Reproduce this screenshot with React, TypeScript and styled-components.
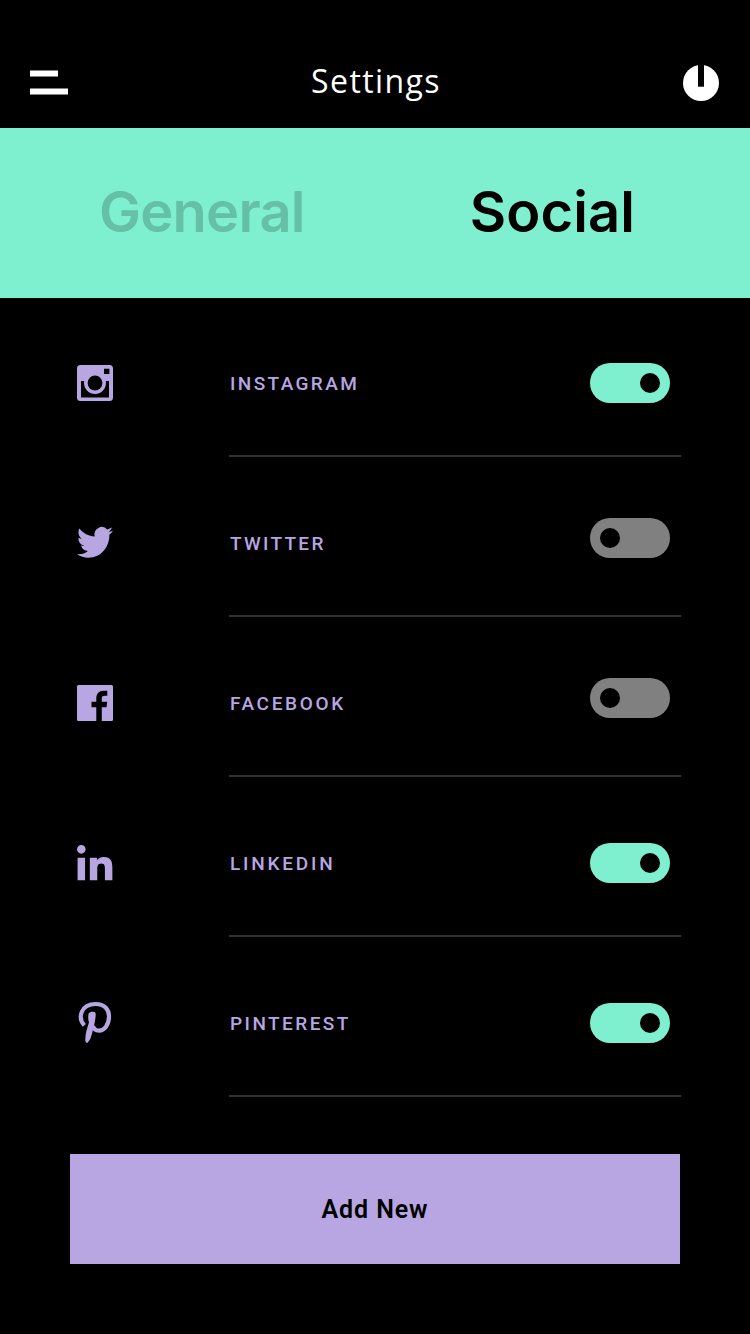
import React, { useState } from "react";
import styled, { createGlobalStyle } from "styled-components";

const mint = "#7ff0cf";
const lilac = "#b8a6e3";

const GlobalStyle = createGlobalStyle`
  * { box-sizing: border-box; }
  body { margin: 0; background: #000; }
  button { border: 0; padding: 0; background: none; cursor: pointer; }
`;

const Screen = styled.main`
  width: 750px;
  height: 1334px;
  display: flex;
  flex-direction: column;
  background: #000;
  font-family: Roboto, "Liberation Sans", sans-serif;
`;

const Header = styled.header`
  height: 128px;
  padding: 38px 31px 0 30px;
  display: grid;
  grid-template-columns: 39px 1fr 36px;
  align-items: center;
`;

const Title = styled.h1`
  margin: 0;
  padding: 0 0 4px;
  text-align: center;
  color: #fff;
  font: 400 32px/44px "Open Sans", sans-serif;
  letter-spacing: 1.4px;
`;

const IconButton = styled.button`
  display: flex;
`;

const Tabs = styled.nav`
  height: 170px;
  padding: 0 115px 3px 99px;
  display: flex;
  justify-content: space-between;
  align-items: center;
  background: ${mint};
`;

const Tab = styled.button<{ $active: boolean; $spacing: number }>`
  color: ${(p) => (p.$active ? "#000" : "#66c0a6")};
  font: 600 56px/70px Inter, sans-serif;
  letter-spacing: ${(p) => p.$spacing}px;
`;

const List = styled.ul`
  margin: 0;
  padding: 0 69px 0 70px;
  list-style: none;
`;

const Row = styled.li`
  height: 160px;
  display: grid;
  grid-template-columns: 50px 1fr;
  column-gap: 109px;
`;

const IconCell = styled.div`
  height: 170px;
  display: flex;
  align-items: center;
  justify-content: center;
  svg { display: block; overflow: visible; }
`;

const Detail = styled.div`
  height: 159px;
  padding: 12px 11px 0 1px;
  display: flex;
  justify-content: space-between;
  align-items: center;
  border-bottom: 2px solid #303030;
`;

const Label = styled.span<{ $spacing: number }>`
  padding-top: 2px;
  color: ${lilac};
  font: 500 19px/24px Roboto, sans-serif;
  letter-spacing: ${(p) => p.$spacing}px;
`;

const Switch = styled.button<{ $on: boolean }>`
  width: 80px;
  height: 40px;
  padding: 0 10px;
  border-radius: 20px;
  display: flex;
  align-items: center;
  justify-content: ${(p) => (p.$on ? "flex-end" : "flex-start")};
  margin-bottom: ${(p) => (p.$on ? 0 : 10)}px;
  background: ${(p) => (p.$on ? mint : "#808080")};
`;

const Knob = styled.span`
  width: 20px;
  height: 20px;
  border-radius: 50%;
  background: #000;
`;

const AddButton = styled.button`
  height: 110px;
  margin: 56px 70px 0;
  && { background: ${lilac}; padding-top: 2px; }
  color: #000;
  font: 600 25px/108px Roboto, sans-serif;
  letter-spacing: 0.9px;
`;

const Instagram = () => (
  <svg width="36" height="36" viewBox="0 0 36 36" fill={lilac}>
    <path
      fillRule="evenodd"
      d="M3.5 0h29A3.5 3.5 0 0 1 36 3.5v29a3.5 3.5 0 0 1-3.5 3.5h-29A3.5 3.5 0 0 1 0 32.5v-29A3.5 3.5 0 0 1 3.5 0zM27 3.8v5.2h5.4V3.8zM4 16v16.4h28V16h-3.2A11 11 0 1 1 7.2 16z"
    />
    <circle cx="18" cy="18" r="7.4" fill="#000" />
  </svg>
);

const Twitter = () => (
  <svg width="36" height="33" viewBox="0 2.25 24 21" preserveAspectRatio="none" fill={lilac}>
    <path d="M23.954 4.569a10 10 0 0 1-2.825.775 4.958 4.958 0 0 0 2.163-2.723c-.951.555-2.005.959-3.127 1.184a4.92 4.92 0 0 0-8.384 4.482C7.691 8.094 4.066 6.13 1.64 3.161a4.822 4.822 0 0 0-.666 2.475c0 1.71.87 3.213 2.188 4.096a4.904 4.904 0 0 1-2.228-.616v.061a4.923 4.923 0 0 0 3.946 4.827 4.996 4.996 0 0 1-2.212.085 4.937 4.937 0 0 0 4.604 3.417 9.868 9.868 0 0 1-6.102 2.105c-.39 0-.779-.023-1.17-.067a13.995 13.995 0 0 0 7.557 2.209c9.054 0 13.999-7.496 13.999-13.986 0-.209 0-.42-.015-.63a9.936 9.936 0 0 0 2.46-2.548z" />
  </svg>
);

const Facebook = () => (
  <svg width="36" height="36" viewBox="0 0 36 36" fill={lilac}>
    <rect width="36" height="36" rx="1.5" />
    <path
      fill="#000"
      d="M19.3 36V22.3h-4.8v-5.5h4.8v-3.3c0-5 2.7-7.8 7.2-7.8h3.8v5h-2.5c-2.3 0-3 .8-3 2.9v3.2h5.4l-.7 5.5h-4.7V36z"
    />
  </svg>
);

const LinkedIn = () => (
  <svg width="36" height="36" viewBox="0 0 448 448" fill={lilac}>
    <path d="M100.28 438H7.4V158h92.88zM53.79 108.1C24.09 108.1 0 83.5 0 53.8a53.79 53.79 0 0 1 107.58 0c0 29.7-24.1 54.3-53.79 54.3zM440 438h-92.68V302.4c0-34.7-.7-72-45-72-45 0-50 37.7-50 69.5V438H159.5V158h89v32h1.3c12.4-23 42.69-40 83-40 94 0 107.2 61.9 107.2 133.7z" />
  </svg>
);

const Pinterest = () => (
  <svg width="34" height="42" viewBox="39 21 102 126">
    <path
      d="M58 91C37 68 48 27 92 27C118 27 132 43 132 64C132 90 118 107 102 107C92 107 86 101 84 93"
      fill="none"
      stroke={lilac}
      strokeWidth="12.5"
    />
    <path
      d="M71 55C75 49 92 48 92 56C93 75 81 118 76 132L67 144Q62 144 61 138C60 115 68 97 72 82C69 75 69 62 71 55Z"
      fill={lilac}
    />
  </svg>
);

const networks = [
  { name: "INSTAGRAM", Icon: Instagram, spacing: 2.4 },
  { name: "TWITTER", Icon: Twitter, spacing: 2.3 },
  { name: "FACEBOOK", Icon: Facebook, spacing: 2.65 },
  { name: "LINKEDIN", Icon: LinkedIn, spacing: 2.8 },
  { name: "PINTEREST", Icon: Pinterest, spacing: 2.45 },
];

export default function App() {
  const [tab, setTab] = useState("Social");
  const [enabled, setEnabled] = useState<Record<string, boolean>>({
    INSTAGRAM: true,
    LINKEDIN: true,
    PINTEREST: true,
  });
  return (
    <>
      <GlobalStyle />
      <Screen>
        <Header>
          <IconButton aria-label="Menu">
            <svg width="39" height="26" viewBox="0 0 39 26" fill="#fff">
              <path d="M0 .4h28v6.2H0zM0 18.4h38v6.2H0z" />
            </svg>
          </IconButton>
          <Title>Settings</Title>
          <IconButton aria-label="Power">
            <svg width="36" height="36" viewBox="0 0 36 36">
              <circle cx="18" cy="18" r="18" fill="#fff" />
              <path d="M15 0h6v21.7h-6z" fill="#000" />
            </svg>
          </IconButton>
        </Header>
        <Tabs>
          <Tab $active={tab === "General"} $spacing={-0.75} onClick={() => setTab("General")}>General</Tab>
          <Tab $active={tab === "Social"} $spacing={0.1} onClick={() => setTab("Social")}>Social</Tab>
        </Tabs>
        <List>
          {networks.map(({ name, Icon, spacing }) => (
            <Row key={name}>
              <IconCell><Icon /></IconCell>
              <Detail>
                <Label $spacing={spacing}>{name}</Label>
                <Switch
                  $on={!!enabled[name]}
                  role="switch"
                  aria-checked={!!enabled[name]}
                  aria-label={name}
                  onClick={() => setEnabled({ ...enabled, [name]: !enabled[name] })}
                >
                  <Knob />
                </Switch>
              </Detail>
            </Row>
          ))}
        </List>
        <AddButton>Add New</AddButton>
      </Screen>
    </>
  );
}
